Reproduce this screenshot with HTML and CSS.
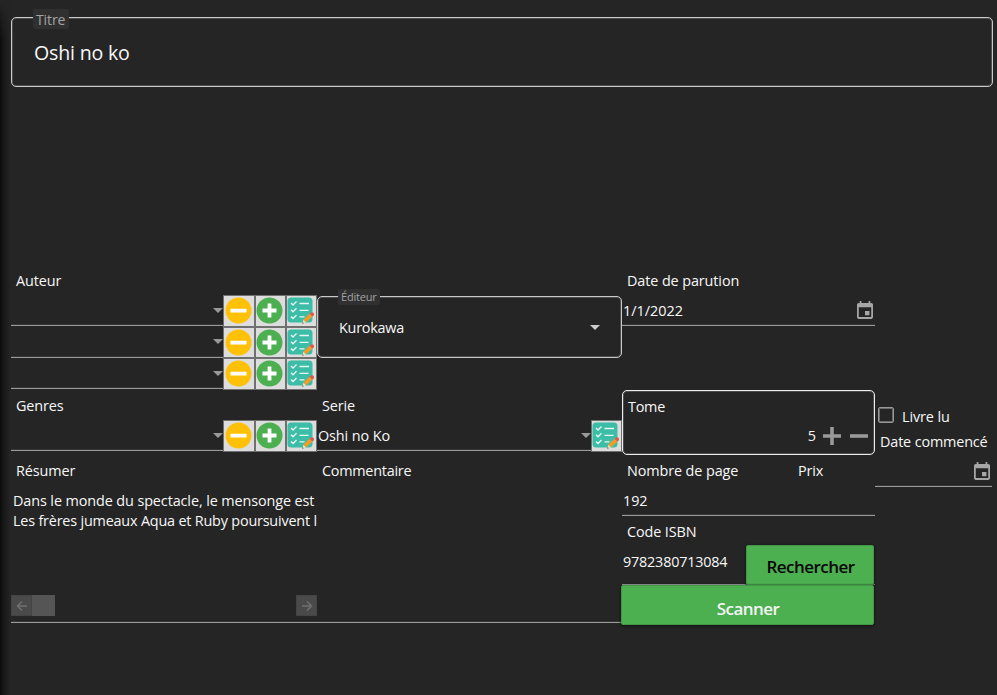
FILE: index.html
```html
<!DOCTYPE html>
<html lang="fr">
<head>
<meta charset="utf-8">
<title>Livre</title>
<link rel="stylesheet" href="styles.css">
</head>
<body>
<svg class="defs" width="0" height="0">
  <symbol id="minus" viewBox="0 0 27 27"><circle cx="13.5" cy="13.5" r="13" fill="#ffc107"/><rect x="5.5" y="11.7" width="16" height="3.8" rx=".6" fill="#fff"/></symbol>
  <symbol id="plus" viewBox="0 0 27 27"><circle cx="13.5" cy="13.5" r="13" fill="#4caf50"/><path d="M13.5 6.5v14M6.5 13.5h14" stroke="#fff" stroke-width="3.8"/></symbol>
  <symbol id="list" viewBox="0 0 27 27"><rect x=".5" y=".5" width="25" height="25" rx="3.5" fill="#3dbda7"/><path d="M4 6l2 2 3.500-3.500M4 12.800l2 2 3.500-3.500M4 19.500l2 2 3.500-3.500M12.500 6.500h9.500M12.500 13.300h9M12.500 19.800h5" fill="none" stroke="#e6f8f4" stroke-width="1.300"/><path d="M15.200 26.700l1.300-4.200 2.700 2.700z" fill="#f3dfb8"/><path d="M15.200 26.700l.5-1.600 1.100 1.100z" fill="#454b50"/><path d="M16.500 22.500l6-5.800 2.900 2.900-6.200 5.600z" fill="#f59a22"/><path d="M22.500 16.700l1.400-1.300q1.300-.7 2.500.4 1.100 1.300.3 2.500l-1.300 1.300z" fill="#e2574c"/></symbol>
  <symbol id="calendar" viewBox="3 1 18 20"><path d="M19 3h-1V1h-2v2H8V1H6v2H5c-1.110 0-2 .9-2 2v14c0 1.100.89 2 2 2h14c1.100 0 2-.9 2-2V5c0-1.100-.9-2-2-2zm0 16H5V8h14v11zm-2-7h-5v5h5v-5z" fill="#a6a6a6"/></symbol>
</svg>
<main class="page">
  <section class="outlined title">
    <span class="legend">Titre</span>
    <span class="value t-title">Oshi no ko</span>
  </section>

  <section class="authors">
    <label class="label">Auteur</label>
    <div class="picker"><div class="combo"><i class="caret"></i></div><button><svg><use href="#minus"/></svg></button><button><svg><use href="#plus"/></svg></button><button><svg><use href="#list"/></svg></button></div>
    <div class="picker"><div class="combo"><i class="caret"></i></div><button><svg><use href="#minus"/></svg></button><button><svg><use href="#plus"/></svg></button><button><svg><use href="#list"/></svg></button></div>
    <div class="picker"><div class="combo"><i class="caret"></i></div><button><svg><use href="#minus"/></svg></button><button><svg><use href="#plus"/></svg></button><button><svg><use href="#list"/></svg></button></div>
  </section>
  <section class="outlined editor">
    <span class="legend small">Éditeur</span>
    <span class="value">Kurokawa</span>
    <i class="caret light"></i>
  </section>
  <section class="release">
    <label class="label">Date de parution</label>
    <div class="field date"><span>1/1/2022</span><svg class="cal"><use href="#calendar"/></svg></div>
  </section>

  <section class="genres">
    <label class="label">Genres</label>
    <div class="picker"><div class="combo"><i class="caret"></i></div><button><svg><use href="#minus"/></svg></button><button><svg><use href="#plus"/></svg></button><button><svg><use href="#list"/></svg></button></div>
  </section>
  <section class="series">
    <label class="label">Serie</label>
    <div class="picker"><div class="combo"><span>Oshi no Ko</span><i class="caret"></i></div><button><svg><use href="#list"/></svg></button></div>
  </section>
  <section class="outlined volume">
    <label>Tome</label>
    <div class="stepper"><span>5</span><svg width="18" height="18"><path d="M9 0v18M0 9h18" stroke="#999" stroke-width="3.600"/></svg><svg width="18" height="18"><path d="M0 9h18" stroke="#999" stroke-width="3.600"/></svg></div>
  </section>
  <section class="reading">
    <label class="check"><i class="box"></i><span>Livre lu</span></label>
    <label class="started">Date commencé</label>
    <div class="field date"><span></span><svg class="cal"><use href="#calendar"/></svg></div>
  </section>

  <section class="summary">
    <label class="label">Résumer</label>
    <div class="text"><p class="line one">Dans le monde du spectacle, le mensonge est</p><p class="line two">Les frères jumeaux Aqua et Ruby poursuivent l</p></div>
    <div class="scroll"><span class="arrow"><svg width="12" height="12"><path d="M11 6H1.500M6 1.500L1.500 6 6 10.500" /></svg></span><span class="thumb"></span><span class="arrow end"><svg width="12" height="12"><path d="M1 6h9.500M6 1.500L10.500 6 6 10.500"/></svg></span></div>
  </section>
  <section class="comment"><label class="label">Commentaire</label></section>
  <section class="details">
    <div class="pair"><label class="label">Nombre de page</label><label class="label">Prix</label></div>
    <div class="field pages"><span>192</span></div>
    <label class="label isbn-label">Code ISBN</label>
    <div class="isbn"><span class="digits">9782380713084</span><button class="green search">Rechercher</button></div>
    <button class="green scan">Scanner</button>
  </section>
</main>
</body>
</html>
```
FILE: styles.css
```css
* { box-sizing: border-box; }
body {
  margin: 0;
  height: 695px;
  overflow: hidden;
  background: linear-gradient(#252525, rgba(37,37,37,0) 40px) , linear-gradient(90deg, #0b0b0b, #191919 4px, #252525 11px);
  color: #f8f8f8;
  font: 14.400px/20px "Open Sans", "Noto Sans", sans-serif;
  letter-spacing: -0.1px;
}
.defs { display: block; }
.page {
  display: grid;
  grid-template-columns: 306px 305px 253px 117px;
  grid-template-rows: 248px 125px 65px 170px;
  padding: 17px 0 0 11px;
}
.outlined {
  position: relative;
  border: 1px solid #c8c8c8;
  border-radius: 5px;
  box-shadow: inset 0 0 0 1px rgba(200,200,200,.25);
}
.title { grid-column: 1 / 5; width: 982px; height: 70px; padding: 24px 22px 22px; display: flex; align-items: center; }
.t-title { font-size: 19.600px; line-height: 26px; letter-spacing: -0.2px; }
.legend {
  position: absolute;
  left: 21px;
  top: -9px;
  width: 36px;
  height: 20px;
  padding-left: 3px;
  border-radius: 2px;
  background: #303030;
  color: #a3a3a3;
  line-height: 21px;
  font-size: 14px;
}
.legend.small { left: 20px; top: -8px; width: 42px; height: 16px; font-size: 11px; line-height: 16px; letter-spacing: -0.2px; }
.label { display: block; height: 30px; padding: 6px 0 0 5px; line-height: 20px; }
.picker { display: flex; height: 31.600px; }
.combo {
  flex: 1;
  height: 31px;
  display: flex;
  align-items: center;
  justify-content: flex-end;
  border-bottom: 1px solid #9a9a9a;
}
.combo, .field, .summary, .comment { box-shadow: inset 0 -1px #363636; }
.combo span { flex: 1; padding: 1px 0 0 1px; }
.caret { width: 0; height: 0; border: 5px solid transparent; border-top-color: #999; border-bottom: 0; }
.caret.light { border-top-color: #ccc; }
button { border: 0; padding: 0; font: inherit; color: inherit; }
.picker button { width: 31.200px; height: 31.600px; background: #ddd; border: 1px solid #707070; }
.picker button svg { display: block; width: 27px; height: 27px; margin: 1px; }
.picker button:nth-last-child(2) svg, .authors button:last-child svg, .genres button:last-child svg, .series button svg { margin-left: .4px; }
.authors { grid-column: 1; }
.editor {
  height: 62px;
  margin-top: 31px;
  display: flex;
  align-items: center;
  justify-content: space-between;
  padding: 0 21px;
}
.editor .value { padding-top: 1px; letter-spacing: -0.25px; }
.field { display: flex; align-items: center; border-bottom: 1px solid #9a9a9a; }
.field span { padding-top: 1px; }
.date { height: 31px; justify-content: space-between; padding: 0 2px 0 1px; }
.release .field { height: 30.500px; }
.release .field span { padding-top: 2px; letter-spacing: 0; }
.cal { width: 16px; height: 18px; }
.genres { grid-column: 1; }
.volume { border-color: #ececec; padding: 6px 5px; height: 65px; }
.volume label { display: block; letter-spacing: -0.25px; }
.stepper { display: flex; align-items: center; justify-content: flex-end; gap: 9px; margin-top: 9px; padding-right: 1px; }
.stepper span { margin-right: -2px; }
.reading { padding-top: 14px; height: 97px; }
.check { display: flex; align-items: center; height: 24px; gap: 8px; padding: 1px 0 0 3px; }
.box { width: 16px; height: 16px; border: 1px solid #999; box-shadow: inset 0 0 0 1px #6a6a6a; border-radius: 2px; margin-top: -4px; }
.started { display: block; height: 28px; padding: 4px 0 0 5px; white-space: nowrap; letter-spacing: -0.15px; }
.summary, .comment { height: 168px; border-bottom: 1px solid #9a9a9a; display: flex; flex-direction: column; }
.summary { grid-column: 1; }
.comment .label { letter-spacing: -0.25px; }
.text { padding: 6px 0 0 2px; height: 110px; overflow: hidden; }
.line { margin: 0; white-space: nowrap; }
.two { letter-spacing: -0.190px; }
.scroll { display: flex; height: 21px; }
.arrow, .thumb { width: 21px; height: 21px; background: #4a4a4a; border: 1px solid #444; }
.thumb { width: 23px; background: #555; border: 0; }
.arrow { display: grid; place-items: center; }
.arrow path { fill: none; stroke: #707070; stroke-width: 1.500; }
.end { margin-left: auto; }
.pair { display: grid; grid-template-columns: 171px 1fr; }
.pages { height: 31px; padding-left: 1px; }
.isbn-label { height: 29px; }
.isbn { display: flex; height: 40px; justify-content: space-between; border-bottom: 1px solid #9a9a9a; }
.digits { padding: 7px 0 0 1px; letter-spacing: -0.2px; }
.green { background: #4caf50; border-radius: 2px; border: 1px solid #429846; box-shadow: 0 1px 3px #111; font-weight: 600; font-size: 17px; letter-spacing: -0.550px; margin-left: -1px; }
.search { width: 128px; height: 40px; color: #050505; padding: 3px 0 0 1px; margin-right: 1px; }
.scan { width: 253px; height: 40px; color: #f5f5f5; display: block; padding: 7px 0 0 1px; position: relative; }
```
